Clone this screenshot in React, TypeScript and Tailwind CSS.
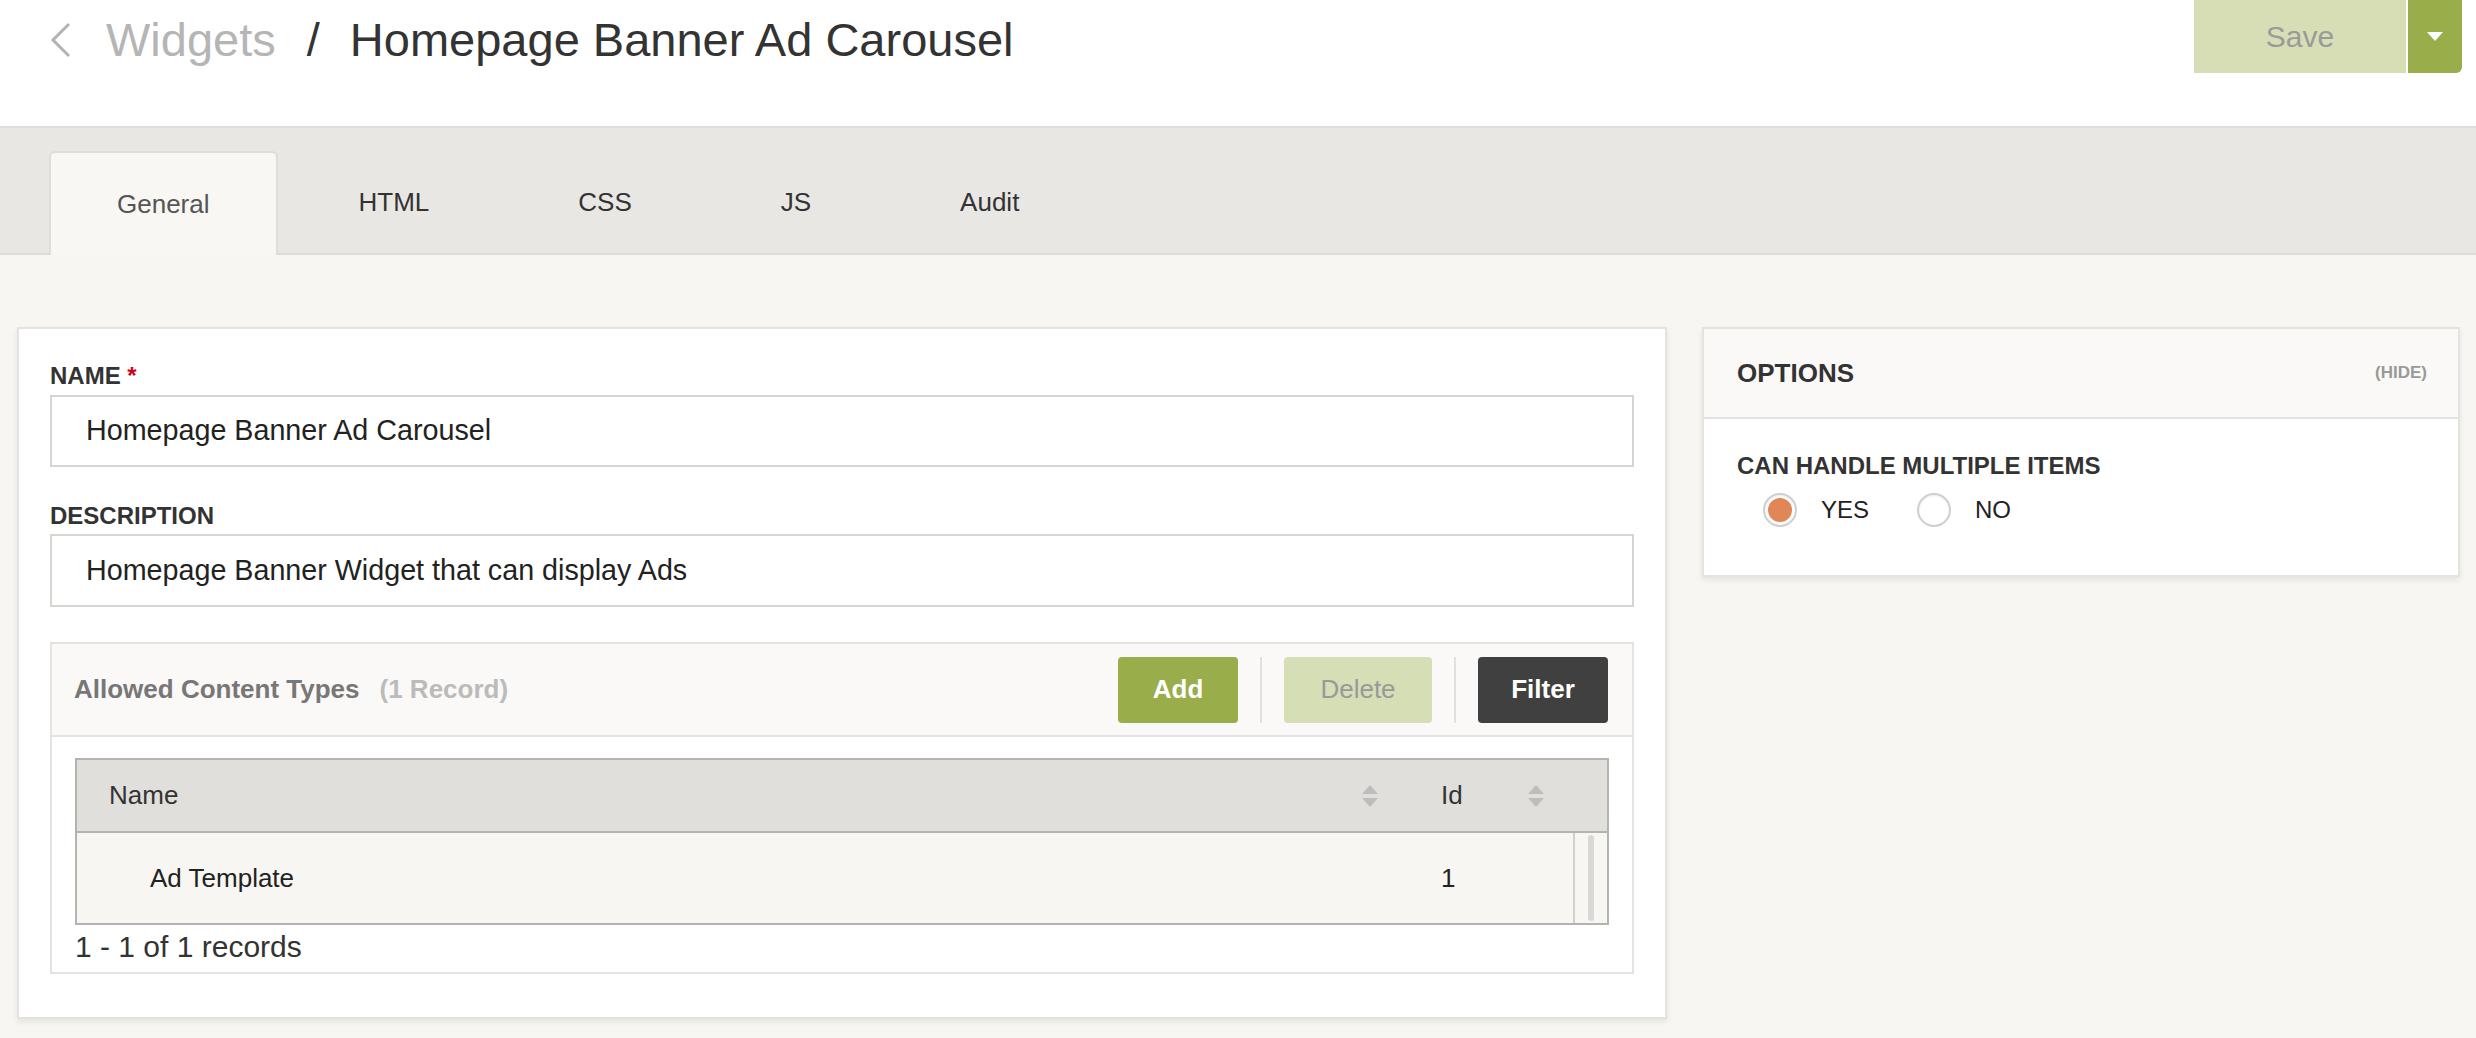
import React from "react";

const font = { fontFamily: '"Liberation Sans", Arial, Helvetica, sans-serif' };

function SortIcon() {
  return (
    <svg width="16" height="22" viewBox="0 0 16 22" className="shrink-0">
      <polygon points="8,0 16,9 0,9" fill="#bdbdbd" />
      <polygon points="0,13 16,13 8,22" fill="#bdbdbd" />
    </svg>
  );
}

function Radio({ checked, label }: { checked?: boolean; label: string }) {
  return (
    <div className="flex items-center gap-[24px]">
      <div className="flex h-[34px] w-[34px] items-center justify-center rounded-full border-2 border-[#cfcfcf] bg-white shadow-[inset_0_1px_2px_rgba(0,0,0,0.08)]">
        {checked && <div className="h-[24px] w-[24px] rounded-full bg-[#e08657]" />}
      </div>
      <span className="text-[24px] leading-[28px] text-[#222]">{label}</span>
    </div>
  );
}

function Tab({ label, active }: { label: string; active?: boolean }) {
  return active ? (
    <div className="relative -mb-[2px] flex h-[104px] items-center rounded-t-[6px] border-2 border-b-0 border-[#deddda] bg-[#f8f7f4] px-[66px] text-[26px] text-[#555]">
      {label}
    </div>
  ) : (
    <div className="flex h-[102px] items-center px-[68px] text-[26px] text-[#333]">{label}</div>
  );
}

export default function App() {
  return (
    <div style={font} className="min-h-[1038px] w-[2476px] bg-[#f7f6f2]">
      {/* top bar */}
      <header className="flex h-[126px] justify-between bg-white">
        <div className="flex items-start pl-[50px] pt-[16px] text-[47px] leading-[48px]">
          <svg width="22" height="36" viewBox="0 0 22 36" className="mt-[6px]">
            <polyline points="19,2 3,18 19,34" fill="none" stroke="#b3b3b3" strokeWidth="3" />
          </svg>
          <span className="ml-[34px] text-[#b5b5b5]">Widgets</span>
          <span className="ml-[31px] text-[#333]">/</span>
          <span className="ml-[30px] text-[#333]">Homepage Banner Ad Carousel</span>
        </div>
        <div className="mr-[14px] flex h-[73px] gap-[2px]">
          <button className="w-[212px] bg-[#d7deb6] text-[30px] text-[#9a9a9a]">Save</button>
          <button className="flex w-[54px] items-center justify-center rounded-br-[6px] bg-[#9aad4b]">
            <svg width="16" height="9" viewBox="0 0 16 9">
              <polygon points="0,0 16,0 8,9" fill="#fff" />
            </svg>
          </button>
        </div>
      </header>

      {/* tabs */}
      <div className="border-t-2 border-[#dfdedb] bg-[#e8e7e3] pt-[23px]">
        <div className="flex items-end gap-[13px] border-b-2 border-[#dcdbd8] pl-[49px]">
          <Tab label="General" active />
          <Tab label="HTML" />
          <Tab label="CSS" />
          <Tab label="JS" />
          <Tab label="Audit" />
        </div>
      </div>

      {/* content */}
      <div className="flex items-start gap-[35px] pl-[17px] pr-[16px] pt-[72px]">
        <div className="w-[1650px] border-2 border-[#e4e3e0] bg-white px-[31px] pb-[43px] pt-[33px] shadow-[0_3px_6px_rgba(0,0,0,0.08)]">
          <label className="block text-[24px] font-bold leading-[28px] text-[#333]">
            NAME <span className="text-[#d0021b]">*</span>
          </label>
          <div className="mt-[5px] flex h-[72px] items-center border-2 border-[#d6d6d0] pl-[34px] text-[28.7px] text-[#222]">
            Homepage Banner Ad Carousel
          </div>

          <label className="mt-[35px] block text-[24px] font-bold leading-[28px] text-[#333]">DESCRIPTION</label>
          <div className="mt-[4px] flex h-[73px] items-center border-2 border-[#d6d6d0] pl-[34px] text-[28.7px] text-[#222]">
            Homepage Banner Widget that can display Ads
          </div>

          {/* allowed content types */}
          <div className="mt-[35px] border-2 border-[#e3e3e1]">
            <div className="flex h-[93px] items-center justify-between border-b-2 border-[#e3e3e1] bg-[#faf9f7] pl-[22px] pr-[24px]">
              <div className="flex items-baseline gap-[20px] text-[26px] font-bold">
                <span className="text-[#777]">Allowed Content Types</span>
                <span className="text-[#bbb]">(1 Record)</span>
              </div>
              <div className="flex h-[66px] items-stretch gap-[22px]">
                <button className="w-[120px] rounded-[4px] bg-[#9aad4b] text-[26px] font-bold text-white">Add</button>
                <div className="w-[2px] bg-[#e0e0dd]" />
                <button className="w-[148px] rounded-[4px] bg-[#d6deb5] text-[26px] text-[#999]">Delete</button>
                <div className="w-[2px] bg-[#e0e0dd]" />
                <button className="w-[130px] rounded-[4px] bg-[#404040] text-[26px] font-bold text-white">Filter</button>
              </div>
            </div>

            <div className="px-[23px] pt-[21px]">
              <div className="border-2 border-[#b3b3b1]">
                <div className="flex h-[73px] items-center border-b-2 border-[#b3b3b1] bg-[#e0dfdb] text-[26px] text-[#333]">
                  <div className="flex w-[1333px] items-center justify-between pl-[32px] pr-[32px]">
                    <span>Name</span>
                    <SortIcon />
                  </div>
                  <div className="flex w-[163px] items-center justify-between pl-[31px] pr-[29px]">
                    <span>Id</span>
                    <SortIcon />
                  </div>
                </div>
                <div className="flex h-[90px] bg-[#f7f6f2] text-[26px] text-[#222]">
                  <div className="flex w-[1333px] items-center pl-[73px]">Ad Template</div>
                  <div className="flex w-[163px] items-center pl-[31px]">1</div>
                  <div className="flex flex-1 justify-center border-l-2 border-[#d0d0cd] py-[2px]">
                    <div className="w-[6px] rounded-full bg-[#d8d8d6]" />
                  </div>
                </div>
              </div>
              <div className="pb-[8px] pt-[5px] text-[30px] leading-[34px] text-[#333]">1 - 1 of 1 records</div>
            </div>
          </div>
        </div>

        {/* options */}
        <div className="flex-1 border-2 border-[#e4e3e0] bg-white shadow-[0_3px_6px_rgba(0,0,0,0.08)]">
          <div className="flex h-[90px] items-center justify-between border-b-2 border-[#e4e3e0] bg-[#faf9f7] pl-[33px] pr-[31px]">
            <span className="text-[26px] font-bold text-[#333]">OPTIONS</span>
            <span className="text-[17px] font-bold text-[#999]">(HIDE)</span>
          </div>
          <div className="pb-[48px] pl-[33px] pt-[33px]">
            <div className="text-[24px] font-bold leading-[28px] text-[#333]">CAN HANDLE MULTIPLE ITEMS</div>
            <div className="mt-[13px] flex items-center gap-[48px] pl-[26px]">
              <Radio checked label="YES" />
              <Radio label="NO" />
            </div>
          </div>
        </div>
      </div>
    </div>
  );
}
